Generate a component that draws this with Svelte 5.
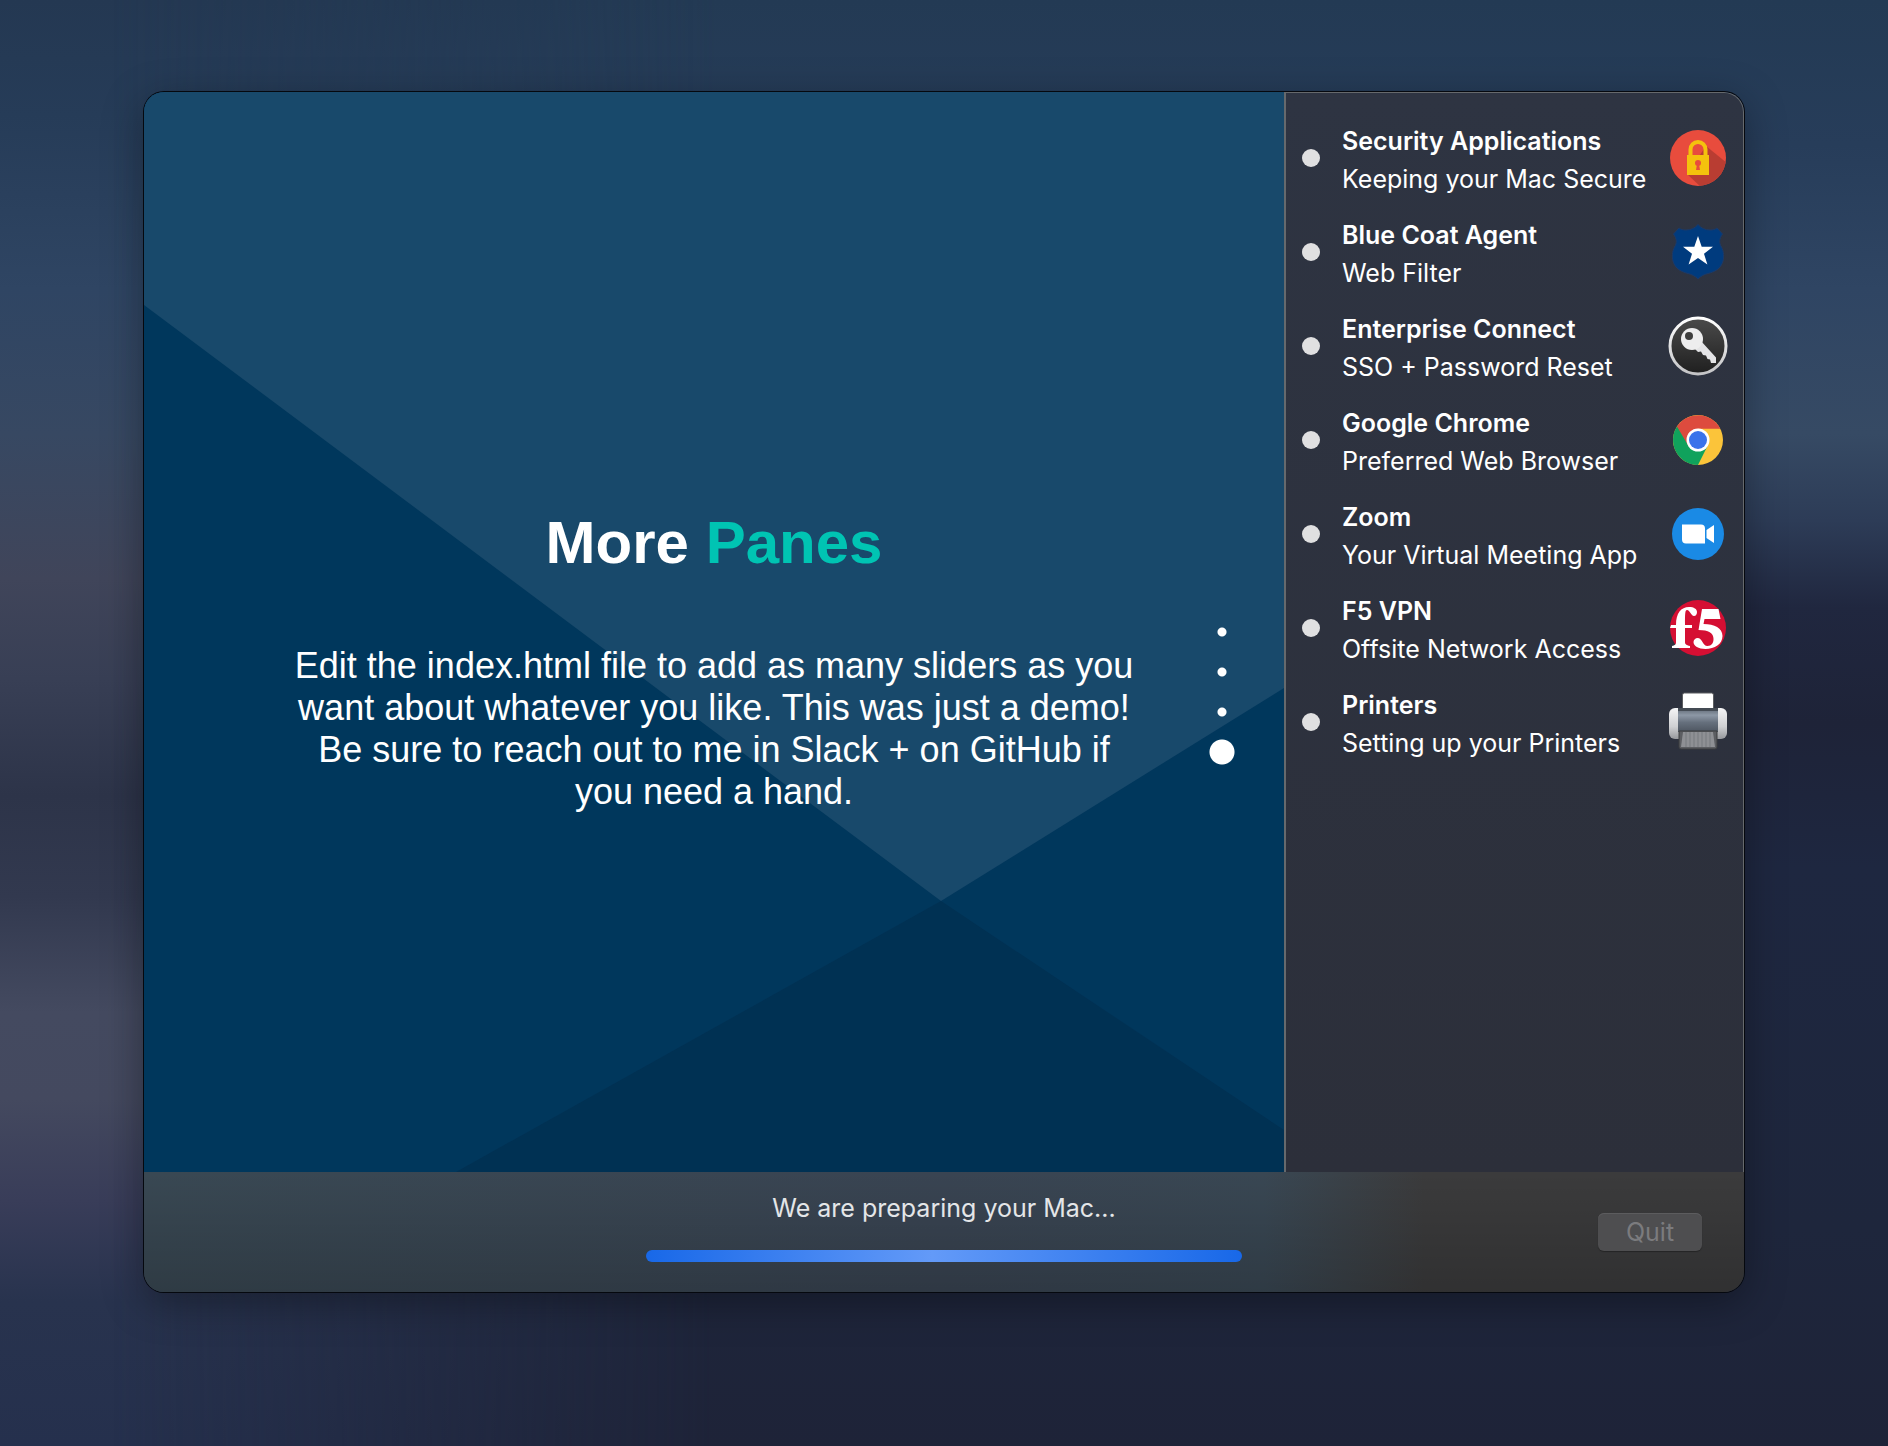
<script>
  const steps = [
    { icon: 'lock', title: 'Security Applications', note: 'Keeping your Mac Secure' },
    { icon: 'shield', title: 'Blue Coat Agent', note: 'Web Filter' },
    { icon: 'key', title: 'Enterprise Connect', note: 'SSO + Password Reset' },
    { icon: 'chrome', title: 'Google Chrome', note: 'Preferred Web Browser' },
    { icon: 'zoom', title: 'Zoom', note: 'Your Virtual Meeting App' },
    { icon: 'f5', title: 'F5 VPN', note: 'Offsite Network Access' },
    { icon: 'printer', title: 'Printers', note: 'Setting up your Printers' }
  ];
  const slides = [1, 2, 3, 4];
  let current = $state(4);
</script>

<div class="desktop">
  <main class="window">
    <section class="slide">
      <svg class="facets" viewBox="0 0 1140 1080" preserveAspectRatio="none" aria-hidden="true">
        <polygon points="0,0 1140,0 1140,596 797,809 0,213" fill="#18496b" />
        <polygon points="797,809 1140,1038 1140,1080 312,1080" fill="#003153" />
      </svg>
      <div class="copy">
        <h1>More <span>Panes</span></h1>
        <p>Edit the index.html file to add as many sliders as you want about whatever you like. This was just a demo! Be sure to reach out to me in Slack + on GitHub if you need a hand.</p>
      </div>
      <nav class="pager" aria-label="Slides">
        {#each slides as n}
          <button class:active={n === current} aria-label={`Slide ${n}`} onclick={() => (current = n)}></button>
        {/each}
      </nav>
    </section>

    <aside>
      <ul>
        {#each steps as step}
          <li>
            <i class="status"></i>
            <div class="label">
              <strong>{step.title}</strong>
              <span>{step.note}</span>
            </div>
            <svg class="icon" viewBox="0 0 60 60" aria-hidden="true">
              {#if step.icon === 'lock'}
                <clipPath id="lock-disc"><circle cx="30" cy="30" r="28" /></clipPath>
                <g clip-path="url(#lock-disc)">
                  <rect width="60" height="60" fill="#e84c3d" />
                  <path d="M38 18L60 36V60H34L19 46Z" fill="#b93d32" />
                </g>
                <path d="M22.500 29V21.500a7.500 7.500 0 0 1 15 0V29" fill="none" stroke="#f4c20d" stroke-width="4" />
                <rect x="19" y="27" width="22" height="20" fill="#f4c20d" />
                <circle cx="30" cy="35" r="3" fill="#e84c3d" />
                <path d="M29 36h2l1 6h-4z" fill="#e84c3d" />
              {:else if step.icon === 'shield'}
                <path d="M30 2.500C33 6 37 8 42 8C45 8 47 7.500 49 6L54.500 12C51 17 51 21 53.500 25C56 30 56 35 55 39C53 47 46 50 40 51.500C36 52.500 33 54 30 57C27 54 24 52.500 20 51.500C14 50 7 47 5 39C4 35 4 30 6.500 25C9 21 9 17 5.500 12L11 6C13 7.500 15 8 18 8C23 8 27 6 30 2.500Z" fill="#003b7e" stroke="#1d3a68" />
                <path d="M30 14l3.700 10.800H45l-9 7 3.400 10.700L30 36l-9.400 6.500L24 31.800l-9-7h11.300z" fill="#fff" />
              {:else if step.icon === 'key'}
                <defs>
                  <linearGradient id="key-face" x2="0" y2="1"><stop stop-color="#4b4b4b" /><stop offset="1" stop-color="#1f1f1f" /></linearGradient>
                  <linearGradient id="key-ring" x2="0" y2="1"><stop stop-color="#fff" /><stop offset="1" stop-color="#c4c4c6" /></linearGradient>
                </defs>
                <circle cx="30" cy="30" r="28" fill="url(#key-face)" stroke="url(#key-ring)" stroke-width="3" />
                <path d="M26 32L33 25L48 41.500V47H43L42 43.500L39.500 43L38 39.500L35 39L33 35.500L30 36Z" fill="#e4e4e6" />
                <circle cx="24" cy="23" r="11" fill="#ededee" />
                <circle cx="21" cy="20" r="4" fill="#3e3e3e" />
              {:else if step.icon === 'chrome'}
                <circle cx="30" cy="30" r="25" fill="#fbc43a" />
                <path d="M30 30L20 36L8.500 17.500A25 25 0 0 1 52.300 18.700H30Z" fill="#dd4b3e" />
                <path d="M9 16.500L20.500 36L30 40L39.500 36L30 55A25 25 0 0 1 9 16.500Z" fill="#10a25c" />
                <circle cx="30" cy="30" r="11.500" fill="#fff" />
                <circle cx="30" cy="30" r="9" fill="#3a73ea" />
              {:else if step.icon === 'zoom'}
                <circle cx="30" cy="30" r="26" fill="#1a8ae5" />
                <path d="M14 20.500h19a4 4 0 0 1 4 4v15H18a4 4 0 0 1-4-4zM38.500 26l7.500-5v18l-7.500-5z" fill="#fff" />
              {:else if step.icon === 'f5'}
                <circle cx="30" cy="30" r="28" fill="#d50f33" />
                <path d="M3 27h5C8 15 13 9 21 9c5 0 8 2 8 5 0 2-1 4-3 4-3 0-4-6-7-6-2 0-2 4-2 15h7v3h-7v14c0 3 2 3 5 4v2H4v-2c3-1 4-1 4-4V30H2z" fill="#fff" />
                <path d="M34 11h16.500l2 10H36.500l-1 5c11 0 19 4 19 12 0 8-8 13-17 13-7 0-12-3-12-7 0-2 2-4 4-4 5 0 5 8 10 8 4 0 6-3 6-7 0-6-5-9-15-9z" fill="#fff" />
              {:else}
                <defs>
                  <linearGradient id="printer-body" x2="0" y2="1"><stop stop-color="#5d6671" /><stop offset=".3" stop-color="#8d98a6" /><stop offset=".6" stop-color="#66707d" /><stop offset="1" stop-color="#4d5560" /></linearGradient>
                  <linearGradient id="printer-side" x2="0" y2="1"><stop stop-color="#f5f5f6" /><stop offset=".6" stop-color="#cfd0d3" /><stop offset="1" stop-color="#96989c" /></linearGradient>
                </defs>
                <rect x="14.500" y="1" width="31" height="20" rx="2" fill="#fff" stroke="#5b5d60" />
                <rect x="1" y="16" width="58" height="31" rx="6" fill="url(#printer-side)" />
                <path d="M10 16h40v24H10z" fill="url(#printer-body)" />
                <path d="M10 16h40v3H10z" fill="#444b54" />
                <path d="M11 39h38v16a2 2 0 0 1-2 2H13a2 2 0 0 1-2-2z" fill="#5c5e62" stroke="#3a3c3f" />
                <path d="M15 40h30l2 15H13z" fill="#8e9094" />
                <path d="M18 40v15M22 40v15M26 40v15M30 40v15M34 40v15M38 40v15M42 40v15" stroke="#777a7e" />
              {/if}
            </svg>
          </li>
        {/each}
      </ul>
    </aside>

    <footer>
      <div class="progress">
        <label for="setup">We are preparing your Mac...</label>
        <progress id="setup" value="100" max="100"></progress>
      </div>
      <button class="quit" disabled>Quit</button>
    </footer>
  </main>
</div>

<style>
  :global(body) {
    margin: 0;
    background: #1e2540;
  }

  .desktop {
    position: relative;
    box-sizing: border-box;
    min-height: 100vh;
    padding: 92px 144px 154px;
    display: flex;
    font-family: Inter, 'Liberation Sans', sans-serif;
    color: #fff;
    background: linear-gradient(#243852, #263c58 8%, #2f4563 20%, #374862 30%, #40455a 40%, #383f55 47%, #2d3449 55%, #32394f 62%, #444a60 70%, #44495f 76%, #393d59 83%, #28334e 90%, #25304d);
  }

  .desktop::before {
    content: '';
    position: absolute;
    inset: 0;
    background: linear-gradient(#233a54, #273d5a 10%, #2f4563 20%, #364a64 30%, #2d3c57 36%, #20273f 42%, #1e2338 50%, #1e2740 60%, #1e263c 85%, #1e2338);
    mask-image: linear-gradient(to right, transparent 6%, #000 38%);
  }

  .window {
    position: relative;
    flex: 1;
    display: grid;
    grid-template-columns: minmax(0, 1140fr) minmax(0, 460fr);
    grid-template-rows: 1fr auto;
    border-radius: 20px;
    overflow: hidden;
    box-shadow: 0 0 0 1px #05080e, 0 10px 40px rgba(0, 0, 0, 0.35);
  }

  .slide {
    position: relative;
    display: flex;
    align-items: center;
    justify-content: center;
    background: #00375c;
  }

  .facets {
    position: absolute;
    inset: 0;
    width: 100%;
    height: 100%;
  }

  .copy {
    position: relative;
    width: 75%;
    padding-top: 56px;
    text-align: center;
    font-family: 'Liberation Sans', sans-serif;
  }

  h1 {
    margin: 0 0 66px;
    font-size: 60px;
    line-height: 72px;
  }

  h1 span {
    color: #00c4b3;
  }

  p {
    margin: 0;
    font-size: 36px;
    line-height: 42px;
  }

  .pager {
    position: absolute;
    top: 50%;
    right: 42px;
    display: grid;
    margin-top: -20px;
  }

  .pager button {
    width: 40px;
    height: 40px;
    padding: 0;
    border: 0;
    background: radial-gradient(circle, #fff 4px, transparent 5px);
  }

  .pager .active {
    background: radial-gradient(circle, #fff 12px, transparent 13px);
  }

  aside {
    border: 2px solid #66696c;
    border-width: 1px 1px 0 2px;
    border-top-right-radius: 20px;
    background: linear-gradient(#2e3442, #2c2f3a);
  }

  ul {
    margin: 0;
    padding: 18px 15px 0 16px;
    list-style: none;
  }

  li {
    display: flex;
    align-items: center;
    height: 94px;
  }

  .status {
    width: 18px;
    height: 18px;
    margin-right: 22px;
    border-radius: 50%;
    background: #e0e0e1;
  }

  .label {
    flex: 1;
    display: grid;
    padding-top: 4px;
    font-size: 25px;
    line-height: 38px;
    white-space: nowrap;
  }

  .label strong {
    font-weight: 600;
  }

  .icon {
    flex: none;
    width: 60px;
    height: 60px;
  }

  footer {
    grid-column: 1 / -1;
    box-sizing: border-box;
    height: 120px;
    display: grid;
    grid-template-columns: 1fr 596px 1fr;
    align-items: center;
    background:
      linear-gradient(transparent, rgba(0, 0, 0, 0.18)),
      linear-gradient(to right, #394853 0%, #394452 50%, #394753 70%, #3b3b3c 80%);
  }

  .progress {
    grid-column: 2;
    display: grid;
    gap: 22px;
    padding-bottom: 14px;
    text-align: center;
  }

  label {
    font-size: 25px;
    line-height: 40px;
    color: #e4e6e8;
  }

  progress {
    appearance: none;
    width: 100%;
    height: 12px;
    border: 0;
    border-radius: 6px;
    overflow: hidden;
  }

  progress::-webkit-progress-bar {
    background: #1868e8;
  }

  progress::-webkit-progress-value {
    background: linear-gradient(to right, #1868e8, #639af8 48%, #1868e8);
  }

  .quit {
    justify-self: end;
    width: 104px;
    height: 38px;
    margin-right: 42px;
    padding: 0;
    border: 0;
    border-radius: 6px;
    background: #4e4e50;
    box-shadow: inset 0 1px #5c5c5e, 0 1px 1px rgba(0, 0, 0, 0.3);
    font-family: inherit;
    font-size: 25px;
    line-height: 38px;
    color: #7b7b7e;
  }
</style>
